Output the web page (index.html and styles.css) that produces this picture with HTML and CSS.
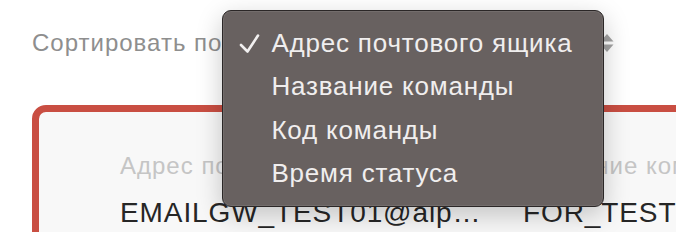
FILE: index.html
```html
<!DOCTYPE html>
<html lang="ru">
<head>
    <meta charset="UTF-8">
    <meta name="viewport" content="width=device-width, initial-scale=1.0">
    <title>Сортировка</title>
    <link rel="stylesheet" href="styles.css">
</head>
<body>

<div class="page">
    <div class="sort-bar">
        <span class="sort-label">Сортировать по</span>
        <div class="sort-select">
            <span class="sort-value">Адрес почтового ящика</span>
            <svg class="sort-arrows" width="14" height="20" viewBox="0 0 14 20">
                <path d="M7 1 L13.5 8.5 L0.5 8.5 Z" fill="#a3a3a3"/>
                <path d="M7 19 L13.5 11.5 L0.5 11.5 Z" fill="#a3a3a3"/>
            </svg>

            <!-- open dropdown -->
            <ul class="sort-menu">
                <li class="menu-item checked">
                    <svg class="check" width="22" height="22" viewBox="0 0 22 22">
                        <polyline points="2,12 8.5,18.5 19,2.5" fill="none" stroke="#f2f0f0" stroke-width="2.6" stroke-linecap="round" stroke-linejoin="round"/>
                    </svg>
                    Адрес почтового ящика
                </li>
                <li class="menu-item">Название команды</li>
                <li class="menu-item">Код команды</li>
                <li class="menu-item">Время статуса</li>
            </ul>
        </div>
    </div>

    <div class="card">
        <div class="field">
            <div class="field-label">Адрес почтового ящика</div>
            <div class="field-value">EMAILGW_TEST01@alp…</div>
        </div>
        <div class="field">
            <div class="field-label">Название команды</div>
            <div class="field-value">FOR_TEST</div>
        </div>
    </div>
</div>

</body>
</html>
```

FILE: styles.css
```css
body {
    margin: 0;
    padding: 0;
    background-color: #fff;
    font-family: "Liberation Sans", Arial, sans-serif;
    overflow: hidden;
}

.page {
    padding-left: 32px;
    width: 760px;
}

.sort-bar {
    display: flex;
    align-items: center;
    padding-top: 26px;
    height: 34px;
}

.sort-label {
    font-size: 24px;
    letter-spacing: 1px;
    color: #8e8e8e;
    white-space: nowrap;
}

.sort-select {
    position: relative;
    display: flex;
    align-items: center;
    margin-left: 12px;
    height: 34px;
}

.sort-value {
    font-size: 22px;
    color: #333;
    width: 366px;
    white-space: nowrap;
}

.sort-arrows {
    display: block;
}

.sort-menu {
    position: absolute;
    left: -12px;
    top: -16px;
    width: 380px;
    margin: 0;
    padding: 11px 0 11px;
    list-style: none;
    background-color: #686160;
    border: 1px solid #2b2727;
    border-radius: 9px;
    box-shadow: inset 0 0 0 1px rgba(255,255,255,0.08), 0 8px 26px rgba(0,0,0,0.22);
    z-index: 10;
}

.menu-item {
    position: relative;
    height: 43.3px;
    line-height: 43px;
    padding-left: 48px;
    font-size: 26px;
    letter-spacing: 0.8px;
    color: #f0eeee;
    white-space: nowrap;
}

.check {
    position: absolute;
    left: 16px;
    top: 11px;
}

.card {
    display: grid;
    grid-template-columns: 403px auto;
    margin-top: 45px;
    padding: 41px 0 0 81px;
    height: 140px;
    background-color: #f8f8f8;
    border: 7px solid #c94e42;
    border-radius: 14px;
}

.field-label {
    font-size: 24px;
    line-height: 26px;
    letter-spacing: 1px;
    color: #c5c5c5;
    white-space: nowrap;
}

.field-value {
    margin-top: 17px;
    font-size: 28px;
    line-height: 34px;
    letter-spacing: 0.9px;
    color: #262626;
    white-space: nowrap;
}
```
